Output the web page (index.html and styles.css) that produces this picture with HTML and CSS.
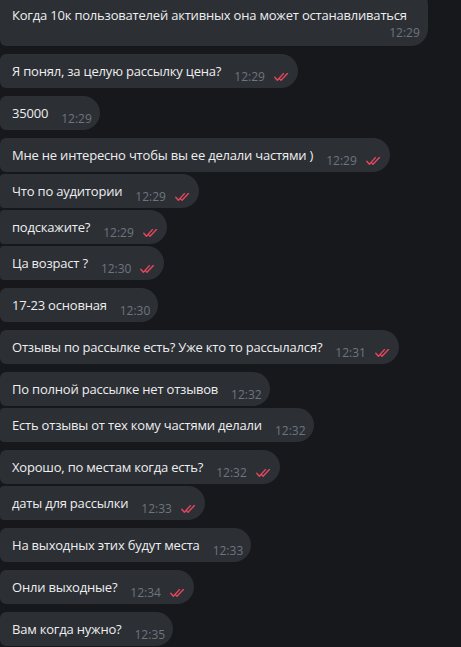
FILE: index.html
```html
<!DOCTYPE html>
<html lang="ru">
<head>
<meta charset="utf-8">
<title>Chat</title>
<link rel="stylesheet" href="styles.css">
</head>
<body>
<div class="chat">
  <div class="bubble multi first-cut">
    <div class="text wide">Когда 10к пользователей активных она может останавливаться</div>
    <div class="time-line"><span class="time">12:29</span></div>
  </div>

  <div class="bubble group-start"><span class="text">Я понял, за целую рассылку цена?</span><span class="time">12:29</span><svg class="ticks" viewBox="0 0 16 8"><path d="M0.8 4.2 L3.4 7.2 L9.4 0.6 M6 6.2 L7 7.2 L13.4 0.6"/></svg></div>

  <div class="bubble group-start"><span class="text">35000</span><span class="time">12:29</span></div>

  <div class="bubble group-start"><span class="text">Мне не интересно чтобы вы ее делали частями )</span><span class="time">12:29</span><svg class="ticks" viewBox="0 0 16 8"><path d="M0.8 4.2 L3.4 7.2 L9.4 0.6 M6 6.2 L7 7.2 L13.4 0.6"/></svg></div>
  <div class="bubble grouped"><span class="text">Что по аудитории</span><span class="time">12:29</span><svg class="ticks" viewBox="0 0 16 8"><path d="M0.8 4.2 L3.4 7.2 L9.4 0.6 M6 6.2 L7 7.2 L13.4 0.6"/></svg></div>
  <div class="bubble grouped"><span class="text">подскажите?</span><span class="time">12:29</span><svg class="ticks" viewBox="0 0 16 8"><path d="M0.8 4.2 L3.4 7.2 L9.4 0.6 M6 6.2 L7 7.2 L13.4 0.6"/></svg></div>
  <div class="bubble grouped"><span class="text">Ца возраст ?</span><span class="time">12:30</span><svg class="ticks" viewBox="0 0 16 8"><path d="M0.8 4.2 L3.4 7.2 L9.4 0.6 M6 6.2 L7 7.2 L13.4 0.6"/></svg></div>

  <div class="bubble group-start"><span class="text">17-23 основная</span><span class="time">12:30</span></div>

  <div class="bubble group-start"><span class="text">Отзывы по рассылке есть? Уже кто то рассылался?</span><span class="time">12:31</span><svg class="ticks" viewBox="0 0 16 8"><path d="M0.8 4.2 L3.4 7.2 L9.4 0.6 M6 6.2 L7 7.2 L13.4 0.6"/></svg></div>

  <div class="bubble group-start"><span class="text">По полной рассылке нет отзывов</span><span class="time">12:32</span></div>
  <div class="bubble grouped"><span class="text">Есть отзывы от тех кому частями делали</span><span class="time">12:32</span></div>

  <div class="bubble group-start"><span class="text">Хорошо, по местам когда есть?</span><span class="time">12:32</span><svg class="ticks" viewBox="0 0 16 8"><path d="M0.8 4.2 L3.4 7.2 L9.4 0.6 M6 6.2 L7 7.2 L13.4 0.6"/></svg></div>
  <div class="bubble grouped"><span class="text">даты для рассылки</span><span class="time">12:33</span><svg class="ticks" viewBox="0 0 16 8"><path d="M0.8 4.2 L3.4 7.2 L9.4 0.6 M6 6.2 L7 7.2 L13.4 0.6"/></svg></div>

  <div class="bubble group-start"><span class="text">На выходных этих будут места</span><span class="time">12:33</span></div>

  <div class="bubble group-start"><span class="text">Онли выходные?</span><span class="time">12:34</span><svg class="ticks" viewBox="0 0 16 8"><path d="M0.8 4.2 L3.4 7.2 L9.4 0.6 M6 6.2 L7 7.2 L13.4 0.6"/></svg></div>

  <div class="bubble group-start"><span class="text">Вам когда нужно?</span><span class="time">12:35</span></div>
</div>
</body>
</html>
```

FILE: styles.css
```css
html, body {
  margin: 0;
  padding: 0;
  background: #17181c;
  height: 100%;
  overflow: hidden;
}

.chat {
  display: flex;
  flex-direction: column;
  align-items: flex-start;
  font-family: "Open Sans", "Noto Sans", sans-serif;
  color: #eceef0;
}

.bubble {
  background: #2c2f34;
  height: 34px;
  line-height: 34px;
  padding: 0 8px 0 12px;
  font-size: 13px;
  white-space: nowrap;
  border-radius: 6px 17px 17px 6px;
  box-sizing: border-box;
}

.bubble.group-start {
  margin-top: 8px;
}

.bubble.grouped {
  margin-top: 2px;
  border-radius: 4px 17px 17px 4px;
}

.bubble.multi {
  height: auto;
  line-height: 18px;
  padding: 18px 8px 5px 12px;
}

.bubble.first-cut {
  margin-top: -12px;
}

.text {
  letter-spacing: -0.2px;
}

.text.wide {
  margin-right: 13px;
}

.time {
  font-size: 12px;
  color: #6c7580;
  margin-left: 13px;
  vertical-align: -5px;
}

.time-line {
  text-align: right;
  line-height: 16px;
}

.time-line .time {
  margin-left: 0;
  vertical-align: baseline;
}

.ticks {
  width: 16px;
  height: 8px;
  margin-left: 9px;
  vertical-align: -5px;
  fill: none;
  stroke: #e4485c;
  stroke-width: 1.4;
  stroke-linecap: round;
  stroke-linejoin: round;
}
```
